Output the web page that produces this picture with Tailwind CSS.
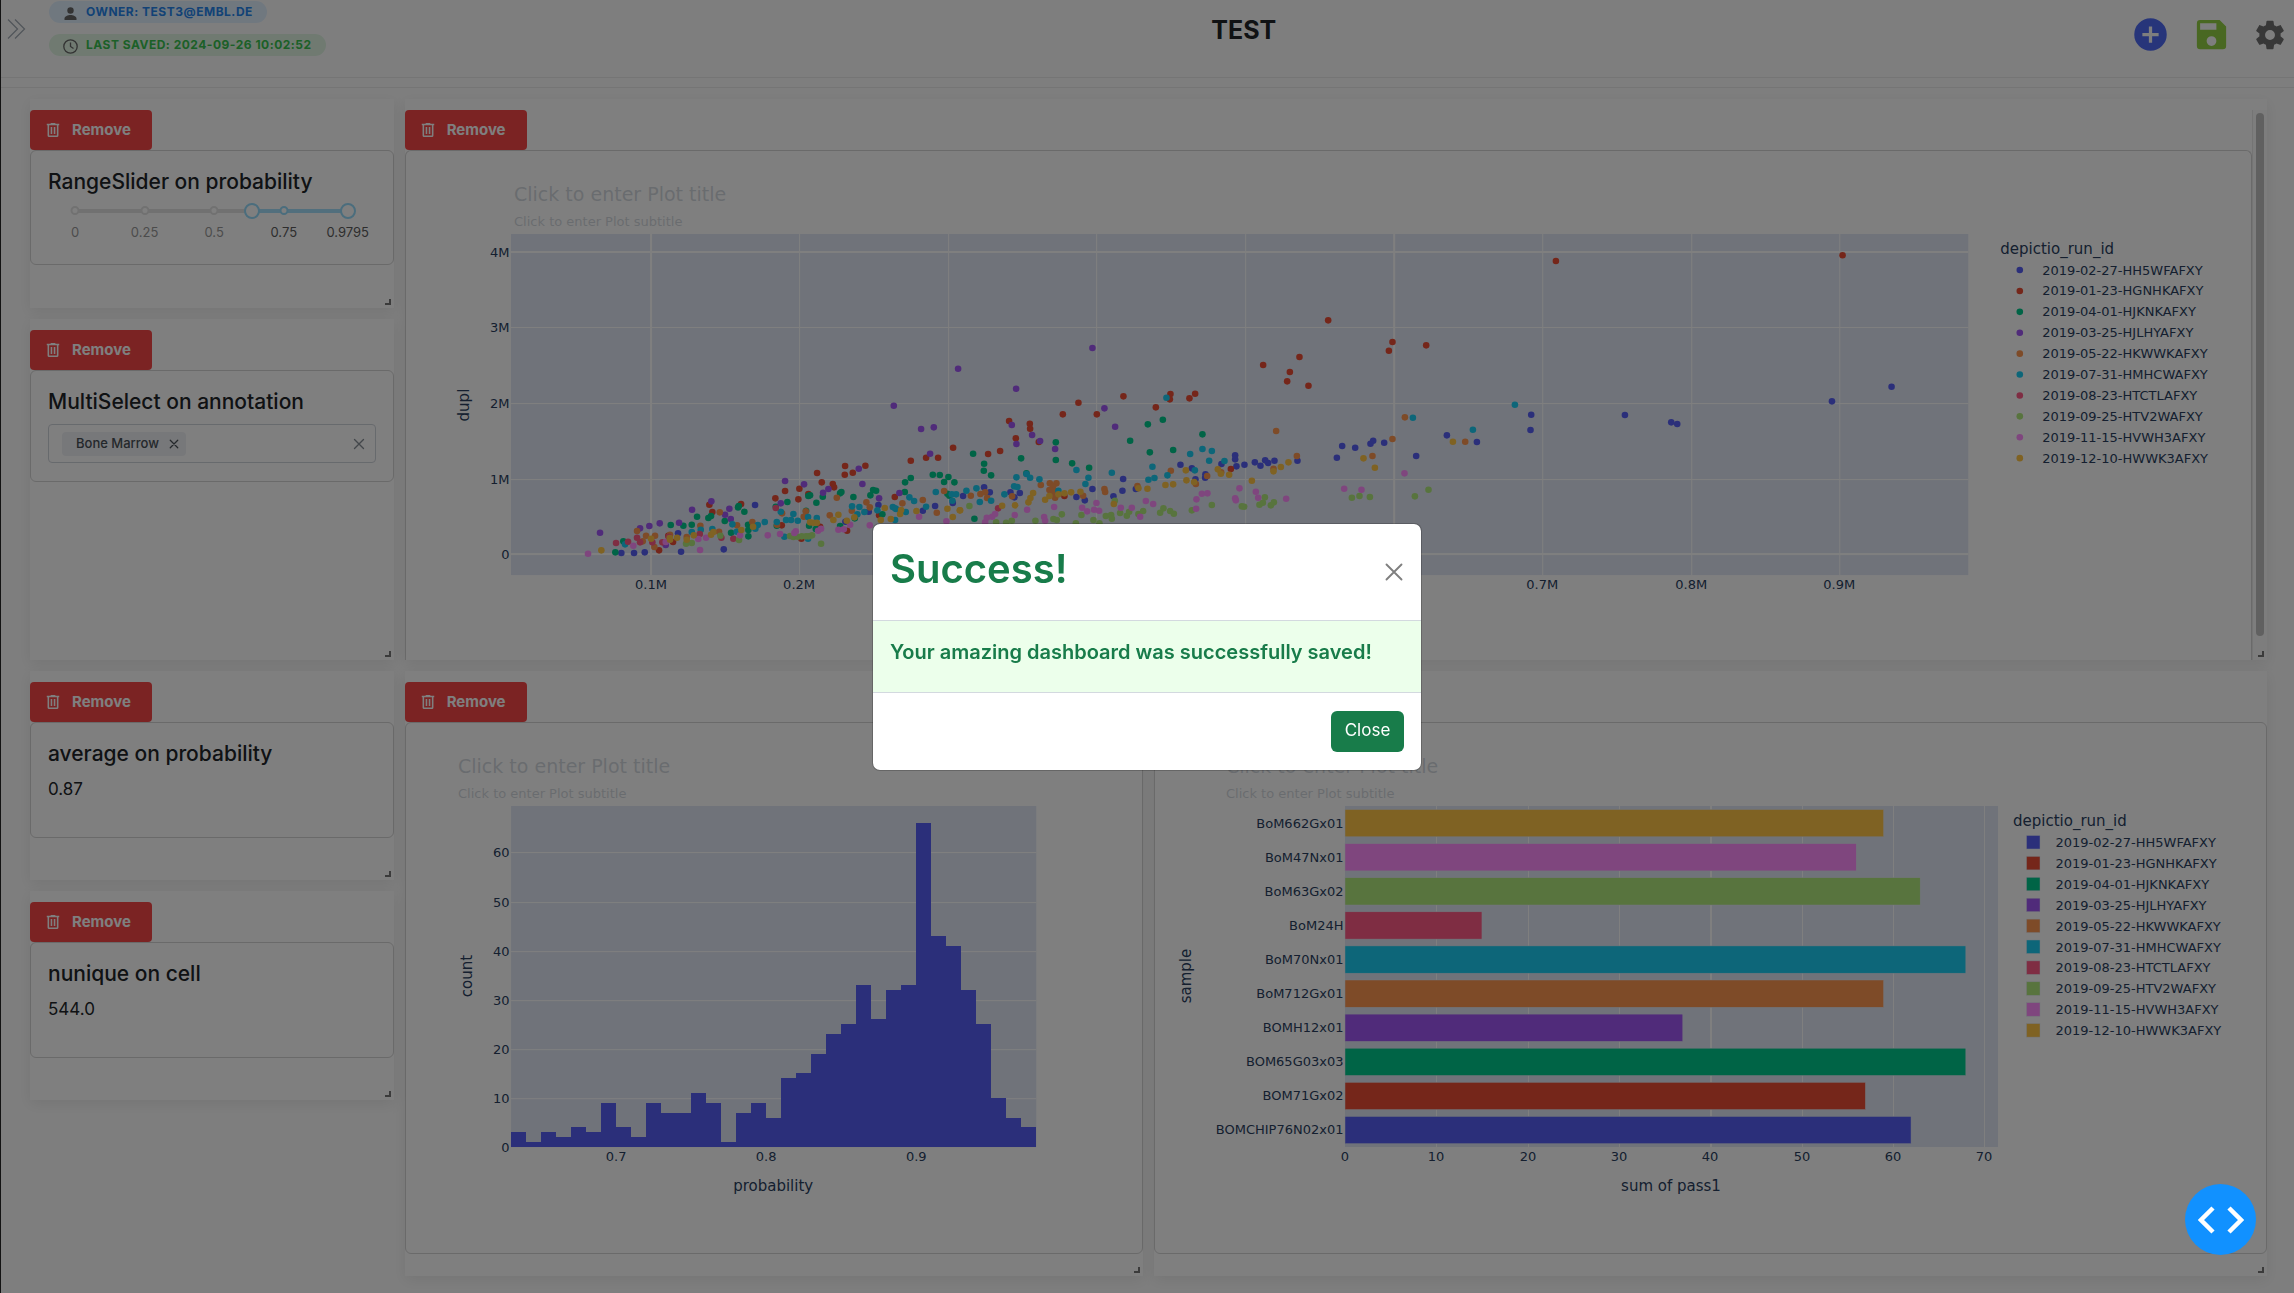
<!DOCTYPE html>
<html lang="en">
<head>
<meta charset="utf-8">
<title>TEST</title>
<script src="https://cdn.jsdelivr.net/npm/@tailwindcss/browser@4"></script>
</head>
<body class="min-h-screen border-l border-neutral-800 bg-[#fdfdfd] font-['Inter',sans-serif] text-[#212529]">

<svg class="hidden">
  <symbol id="trash" viewBox="4 3 16 18"><path fill="currentColor" d="M9 3v1H4v2h1v13a2 2 0 0 0 2 2h10a2 2 0 0 0 2-2V6h1V4h-5V3H9M7 6h10v13H7V6m2 2v9h2V8H9m4 0v9h2V8h-2Z"/></symbol>
  <symbol id="cross" viewBox="0 0 16 16"><path d="M2 2l12 12M14 2L2 14" fill="none" stroke="currentColor" stroke-linecap="round"/></symbol>
</svg>

<header class="flex h-[78px] items-start border-b border-[#eaeaea]">
  <div class="flex w-[22%] items-start">
    <button type="button" aria-label="Open sidebar" class="mt-[18px] ml-[6px] text-[#a3abb5]">
      <svg class="h-[22px] w-[20px]" viewBox="0 0 20 22" fill="none" stroke="currentColor" stroke-width="1.3"><path d="M1 1.500l9.500 9.500L1 20.500M8 1.500l9.500 9.500L8 20.500"/></svg>
    </button>
    <div class="mt-px ml-[22px] flex flex-col items-start gap-[11px] text-[12px] font-bold tracking-[0.5px]">
      <div class="flex h-[22px] items-center gap-2 rounded-full bg-[#e1f0ff] px-[14px] text-[#2585ec]">
        <svg class="mt-[2px] size-[15px] text-[#666]" viewBox="0 0 15 15" fill="currentColor"><circle cx="7.500" cy="4.500" r="3.200"/><path d="M1.500 14v-1.500c0-2.300 3.500-3.500 6-3.500s6 1.200 6 3.500V14z"/></svg>
        <span>OWNER: TEST3@EMBL.DE</span>
      </div>
      <div class="flex h-[22px] items-center gap-2 rounded-full bg-[#e0f5e3] px-[14px] text-[#38c04f]">
        <svg class="mt-[2px] size-[15px] text-[#666]" viewBox="0 0 15 15" fill="none" stroke="currentColor" stroke-width="1.300"><circle cx="7.500" cy="7.500" r="6.700"/><path d="M7.500 3.500v4l3 2"/></svg>
        <span>LAST SAVED: 2024-09-26 10:02:52</span>
      </div>
    </div>
  </div>
  <h1 class="mt-[13px] flex-1 text-center text-[25px] leading-[34px] font-bold">TEST</h1>
  <div class="mt-[15px] flex w-[13.6%] items-center justify-end gap-[22px] pr-[7px]">
    <button type="button" aria-label="Add component" class="text-[#4f6af5]"><svg class="size-[39px]" viewBox="0 0 24 24"><path fill="currentColor" d="M17 13h-4v4h-2v-4H7v-2h4V7h2v4h4m-5-9A10 10 0 0 0 2 12a10 10 0 0 0 10 10 10 10 0 0 0 10-10A10 10 0 0 0 12 2Z"/></svg></button>
    <button type="button" aria-label="Save" class="text-[#93d044]"><svg class="size-[39px]" viewBox="0 0 24 24"><path fill="currentColor" d="M15 9H5V5h10m-3 14a3 3 0 0 1-3-3 3 3 0 0 1 3-3 3 3 0 0 1 3 3 3 3 0 0 1-3 3m5-16H5a2 2 0 0 0-2 2v14a2 2 0 0 0 2 2h14a2 2 0 0 0 2-2V7l-4-4Z"/></svg></button>
    <button type="button" aria-label="Settings" class="text-[#707070]"><svg class="size-[34px]" viewBox="0 0 24 24"><path fill="currentColor" d="M12 15.500A3.500 3.500 0 0 1 8.500 12 3.500 3.500 0 0 1 12 8.500a3.500 3.500 0 0 1 3.500 3.500 3.500 3.500 0 0 1-3.500 3.500m7.430-2.530c.04-.32.07-.64.07-.97s-.03-.66-.07-1l2.110-1.630c.19-.15.24-.42.12-.64l-2-3.460c-.12-.22-.39-.31-.61-.22l-2.490 1c-.52-.39-1.060-.73-1.690-.98l-.37-2.650A.506.506 0 0 0 14 2h-4c-.25 0-.46.18-.5.42l-.37 2.650c-.63.25-1.170.59-1.690.98l-2.490-1c-.22-.09-.49 0-.61.22l-2 3.460c-.13.22-.07.49.12.64L4.570 11c-.04.34-.07.67-.07 1s.03.65.07.97l-2.110 1.660c-.19.15-.25.42-.12.64l2 3.460c.12.22.39.3.61.22l2.490-1.010c.52.4 1.060.74 1.690.99l.37 2.650c.04.24.25.42.5.42h4c.25 0 .46-.18.5-.42l.37-2.650c.63-.26 1.170-.59 1.690-.99l2.490 1.010c.22.08.49 0 .61-.22l2-3.460c.12-.22.07-.49-.12-.64l-2.110-1.660Z"/></svg></button>
  </div>
</header>
<hr class="mt-[9px] border-[#eaeaea]">

<main class="mt-[11px] mr-[27px] ml-[29px] grid auto-rows-[33px] grid-cols-12 gap-[11px]">

  <section class="relative col-span-2 row-span-5 bg-white pt-[11px] shadow-[0_4px_14px_rgba(0,0,0,0.08)]">
    <button type="button" class="flex h-10 w-[122px] items-center rounded-[4px] bg-[#f64747] pl-4 text-[15px] font-bold text-white"><svg class="mr-3 size-[14px]"><use href="#trash"/></svg>Remove</button>
    <div class="h-[115px] rounded-[6px] border border-[#d4d4d4] px-[17px] pt-[18px]">
      <h2 class="text-[21px] leading-[26px] font-medium">RangeSlider on probability</h2>
      <div class="relative mt-[14px] mr-[28px] ml-[27px] h-1 rounded-full bg-[#e3e3e3]" id="slider">
        <div class="absolute top-0 h-1 bg-[#a5dffa]" style="left:64.800%;width:35.200%"></div>
      </div>
    </div>
    <span class="absolute right-[3px] bottom-[3px] size-[6px] border-r-2 border-b-2 border-[#777]"></span>
  </section>

  <section class="relative col-span-10 row-span-13 flex bg-white pt-[11px] shadow-[0_4px_14px_rgba(0,0,0,0.08)]">
    <div class="flex min-w-0 flex-1 flex-col">
      <button type="button" class="flex h-10 w-[122px] shrink-0 items-center rounded-[4px] bg-[#f64747] pl-4 text-[15px] font-bold text-white"><svg class="mr-3 size-[14px]"><use href="#trash"/></svg>Remove</button>
      <div class="min-h-0 flex-1 overflow-hidden rounded-t-[6px] border border-b-0 border-[#d4d4d4]">
        <svg id="scatter" class="h-auto w-full font-['DejaVu_Sans',sans-serif] text-[13px]" viewBox="406 151 1845 509" role="img" aria-label="dupl scatter plot"></svg>
      </div>
    </div>
    <div class="flex w-[15px] justify-center border-l border-[#e8e8e8] bg-[#fafafa] pt-[3px]"><div class="h-[523px] w-2 rounded-full bg-[#c1c1c1]"></div></div>
    <span class="absolute right-[3px] bottom-[3px] size-[6px] border-r-2 border-b-2 border-[#777]"></span>
  </section>

  <section class="relative col-span-2 row-span-8 bg-white pt-[11px] shadow-[0_4px_14px_rgba(0,0,0,0.08)]">
    <button type="button" class="flex h-10 w-[122px] items-center rounded-[4px] bg-[#f64747] pl-4 text-[15px] font-bold text-white"><svg class="mr-3 size-[14px]"><use href="#trash"/></svg>Remove</button>
    <div class="rounded-[6px] border border-[#d4d4d4] px-[17px] py-[18px]">
      <h2 class="text-[21px] leading-[26px] font-medium"><label for="annotation">MultiSelect on annotation</label></h2>
      <div class="mt-[9px] flex h-[39px] items-center rounded-[4px] border border-[#ced4da] pr-[10px] pl-[13px]">
        <span class="flex h-6 shrink-0 items-center rounded-[4px] bg-[#eff1f4] pr-[7px] pl-[14px] text-[13px] font-medium text-[#495057]">Bone Marrow
          <button type="button" aria-label="Remove Bone Marrow" class="ml-[10px]"><svg class="size-[10px]" stroke-width="2"><use href="#cross"/></svg></button></span>
        <input id="annotation" type="text" class="min-w-0 flex-1 bg-transparent outline-none">
        <button type="button" aria-label="Clear" class="text-[#868e96]"><svg class="size-3" stroke-width="1.800"><use href="#cross"/></svg></button>
      </div>
    </div>
    <span class="absolute right-[3px] bottom-[3px] size-[6px] border-r-2 border-b-2 border-[#777]"></span>
  </section>

  <section class="relative col-span-2 row-span-5 bg-white pt-[11px] shadow-[0_4px_14px_rgba(0,0,0,0.08)]">
    <button type="button" class="flex h-10 w-[122px] items-center rounded-[4px] bg-[#f64747] pl-4 text-[15px] font-bold text-white"><svg class="mr-3 size-[14px]"><use href="#trash"/></svg>Remove</button>
    <div class="h-[116px] rounded-[6px] border border-[#d4d4d4] px-[17px] pt-[18px]">
      <h2 class="text-[21px] leading-[26px] font-medium">average on probability</h2>
      <p class="mt-[9px] text-[17px] leading-[26px]">0.87</p>
    </div>
    <span class="absolute right-[3px] bottom-[3px] size-[6px] border-r-2 border-b-2 border-[#777]"></span>
  </section>

  <section class="relative col-span-4 row-span-14 bg-white pt-[11px] shadow-[0_4px_14px_rgba(0,0,0,0.08)]">
    <button type="button" class="flex h-10 w-[122px] items-center rounded-[4px] bg-[#f64747] pl-4 text-[15px] font-bold text-white"><svg class="mr-3 size-[14px]"><use href="#trash"/></svg>Remove</button>
    <div class="rounded-[6px] border border-[#d4d4d4]">
      <svg id="histogram" class="h-auto w-full font-['DejaVu_Sans',sans-serif] text-[13px]" viewBox="406 723 736 530" role="img" aria-label="probability histogram"></svg>
    </div>
    <span class="absolute right-[3px] bottom-[3px] size-[6px] border-r-2 border-b-2 border-[#777]"></span>
  </section>

  <section class="relative col-span-6 row-span-14 bg-white pt-[11px] shadow-[0_4px_14px_rgba(0,0,0,0.08)]">
    <button type="button" class="flex h-10 w-[122px] items-center rounded-[4px] bg-[#f64747] pl-4 text-[15px] font-bold text-white"><svg class="mr-3 size-[14px]"><use href="#trash"/></svg>Remove</button>
    <div class="rounded-[6px] border border-[#d4d4d4]">
      <svg id="bars" class="h-auto w-full font-['DejaVu_Sans',sans-serif] text-[13px]" viewBox="1155 723 1111 530" role="img" aria-label="sum of pass1 by sample"></svg>
    </div>
    <span class="absolute right-[3px] bottom-[3px] size-[6px] border-r-2 border-b-2 border-[#777]"></span>
  </section>

  <section class="relative col-span-2 row-span-5 bg-white pt-[11px] shadow-[0_4px_14px_rgba(0,0,0,0.08)]">
    <button type="button" class="flex h-10 w-[122px] items-center rounded-[4px] bg-[#f64747] pl-4 text-[15px] font-bold text-white"><svg class="mr-3 size-[14px]"><use href="#trash"/></svg>Remove</button>
    <div class="h-[116px] rounded-[6px] border border-[#d4d4d4] px-[17px] pt-[18px]">
      <h2 class="text-[21px] leading-[26px] font-medium">nunique on cell</h2>
      <p class="mt-[9px] text-[17px] leading-[26px]">544.0</p>
    </div>
    <span class="absolute right-[3px] bottom-[3px] size-[6px] border-r-2 border-b-2 border-[#777]"></span>
  </section>
</main>

<div class="fixed inset-0 flex items-center justify-center bg-black/50">
  <div role="dialog" aria-modal="true" aria-labelledby="dialog-title" class="w-[550px] rounded-lg border border-black/20 bg-white bg-clip-padding text-[#187c4a]">
    <div class="flex h-[97px] items-center justify-between border-b border-[#d3d9df] px-[17px]">
      <h2 id="dialog-title" class="mb-[5px] text-[40px] leading-[50px] font-semibold">Success!</h2>
      <button type="button" aria-label="Dismiss" class="text-[#7f7f7f]"><svg class="size-[20px]" stroke-width="1.500"><use href="#cross"/></svg></button>
    </div>
    <div class="h-[72px] border-b border-[#d3d9df] bg-[#ecffeb] px-[17px] pt-[17px] text-[20px] leading-[28px] font-semibold">Your amazing dashboard was successfully saved!</div>
    <div class="flex h-[77px] items-center justify-end px-[17px]">
      <button type="button" class="h-[41px] w-[73px] rounded-[6px] bg-[#187c4a] text-[17px] text-white">Close</button>
    </div>
  </div>
</div>

<button type="button" aria-label="Developer tools" class="fixed right-[38px] bottom-[38px] flex size-[71px] items-center justify-center rounded-full bg-[#1191ff] text-white">
  <svg class="h-7 w-[46px]" viewBox="0 0 46 28" fill="none" stroke="currentColor" stroke-width="4.500"><path d="M15 2L3 14l12 12M31 2l12 12-12 12"/></svg>
</button>

<script>
const INK = '#2a3f5f', PLOT = '#e1e7f4', GRID = '#fff';
const COLORS = ['#575ff5','#eb4c34','#00c88c','#a056f4','#fc9650','#1acdf2','#fe5a86','#b0e87c','#ff8cfc','#fec446'];
const RUNS = ['2019-02-27-HH5WFAFXY','2019-01-23-HGNHKAFXY','2019-04-01-HJKNKAFXY','2019-03-25-HJLHYAFXY','2019-05-22-HKWWKAFXY','2019-07-31-HMHCWAFXY','2019-08-23-HTCTLAFXY','2019-09-25-HTV2WAFXY','2019-11-15-HVWH3AFXY','2019-12-10-HWWK3AFXY'];

const text = (x, y, s, o = {}) => `<text x="${x}" y="${y}" fill="${INK}" font-size="${o.size || 13}" text-anchor="${o.anchor || 'start'}"${o.fade ? ' opacity="0.2"' : ''}>${s}</text>`;
const vtext = (x, y, s) => `<text transform="translate(${x} ${y}) rotate(-90)" fill="${INK}" font-size="15" text-anchor="middle">${s}</text>`;
const rect = (x, y, w, h, c, extra = '') => `<rect x="${x}" y="${y}" width="${w}" height="${h}" fill="${c}" ${extra}/>`;
const titles = (x, y) => text(x, y, 'Click to enter Plot title', {size: 19, fade: 1}) + text(x, y + 25, 'Click to enter Plot subtitle', {fade: 1});

/* Range slider marks, handles and labels */
const MAX = 0.9795, slider = document.getElementById('slider');
[0, 0.25, 0.5, 0.75, MAX].forEach(v => {
  const left = v / MAX * 100, on = v > 0.7;
  slider.insertAdjacentHTML('beforeend',
    (v < MAX ? `<span class="absolute -top-[3px] size-[9px] -translate-x-1/2 rounded-full border-2 bg-white ${on ? 'border-[#96dbfa]' : 'border-[#e3e3e3]'}" style="left:${left}%"></span>` : '') +
    `<span class="absolute top-[14px] -translate-x-1/2 text-[13px] leading-[18px] ${on ? 'text-[#5c5c5c]' : 'text-[#999]'}" style="left:${left}%">${v}</span>`);
});
[0.635, MAX].forEach((v, i) => slider.insertAdjacentHTML('beforeend',
  `<span class="absolute -top-[6px] size-4 -translate-x-1/2 rounded-full border-2 border-[#96dbfa] bg-white" style="left:${v / MAX * 100}%"></span>
   <input type="range" min="0" max="0.9795" step="any" value="${v}" aria-label="${i ? 'Maximum' : 'Minimum'} probability" class="absolute inset-x-0 -top-[6px] h-4 w-full opacity-0">`));

/* Scatter: each run has two panels of points, in thirds of a unit from the panel origins (500, 230) and (960, 230) */
const POINTS = [
 [[364,969,402,969,434,967,543,965,671,958,765,825,534,910,1135,825,1106,845,1305,828,1268,842,1358,819,1036,875],
  [9,798,72,772,89,787,151,787,163,802,179,789,349,801,374,811,397,777,489,747,487,782,460,799,527,777,661,704,695,715,706,748,736,733,735,743,784,702,825,676,825,688,829,709,853,704,884,697,901,707,915,691,924,699,943,692,1012,692,1130,683,1146,648,1185,653,1231,641,1239,632,1272,638,1368,678,1460,616,1550,636,1713,554,1711,600,1994,555,2133,577,2151,582,2615,514,2794,470]],
 [[477,961,519,936,628,824,637,846,723,822,826,805,855,783,898,776,895,808,925,792,951,729,965,757,998,762,1002,772,1035,708,1034,734,1058,728,1096,707,1232,692,1278,683,1314,683,1359,653,1184,801,845,886,904,926,1041,902,960,890,1137,856,505,917],
  [84,672,120,663,147,573,167,625,209,581,210,596,236,636,308,553,355,518,410,553,490,499,587,532,631,492,629,508,688,505,705,491,909,405,1018,381,989,426,981,454,1045,467,1104,271,1297,336,1286,362,1398,346,812,717,313,798,1787,93,2647,76]],
 [[346,967,370,934,512,885,550,887,575,884,591,860,625,864,633,858,714,832,716,828,733,845,674,873,693,908,744,884,745,900,745,919,827,830,862,816,930,796,925,798,918,842,927,887,949,818,947,897,968,800,1024,786,1020,790,1060,801,1119,780,1128,782,1111,796,1147,853,1215,757,1232,744,1214,786,1298,734,1319,735,1332,756,1345,741,1363,757,1342,791,1348,797,1064,865,1020,888,830,887],
  [39,671,72,701,71,722,93,736,43,866,183,685,287,637,287,690,336,700,387,713,199,730,510,632,563,583,608,569,569,667,639,660,727,613]],
 [[300,908,420,895,448,888,479,880,537,878,497,945,576,839,634,814,675,854,688,836,692,867,842,820,855,753,912,763,969,788,985,777,1076,716,1087,762,1137,805,1198,789,1290,671,1301,592,1263,597,1181,527,1374,416],
  [168,476,155,585,169,642,216,615,240,633,285,657,397,354,433,535,465,590]],
 [[411,903,438,917,465,917,428,934,463,951,510,914,601,887,659,847,657,905,757,876,711,886,831,884,846,850,917,844,911,860,989,856,1010,803,1055,842,1099,817,1109,832,1207,820,1268,810,1310,848,1332,783,560,921],
  [32,797,61,792,75,787,81,804,156,799,242,765,269,760,289,760,279,768,268,780,284,782,276,792,285,803,369,797,433,777,435,786,532,768,632,722,741,738,707,762,783,727,940,716,948,603,1010,678,1237,678,1297,627,1334,562,1515,635]],
 [[375,943,575,906,602,899,637,897,697,883,710,905,773,885,794,876,766,896,830,876,842,845,858,870,873,870,880,852,893,872,924,861,950,864,853,920,924,926,1056,829,1078,831,1072,853,1093,846,1132,841,1178,831,1185,835,1188,837,1217,846,1228,802,1242,813,1278,830,1307,786,1355,793,1368,793,1357,812,1185,870],
  [19,782,49,775,59,816,93,812,133,793,162,769,172,771,169,742,199,732,210,743,238,748,349,720,385,743,376,762,295,782,455,728,577,710,583,744,565,749,622,736,704,721,690,672,727,657,755,663,747,692,793,693,619,503,1358,563,1538,599,1664,524]],
 [[348,939,384,935,411,923,420,937,457,937,487,937,506,920,599,912,664,923,700,926,827,834],
  [114,835]],
 [[558,941,575,939,661,917,717,930,870,918,880,921,893,920,905,919,918,919,926,919,936,916,963,941],
  [28,828,108,877,138,878,155,872,226,872,280,867,290,870,305,853,347,880,364,855,400,870,418,880,437,858,453,855,455,866,464,812,480,849,500,857,507,845,535,852,549,843,600,848,610,835,630,843,641,851,695,841,755,825,845,829,852,830,898,824,908,818,914,802,932,826,941,817,1175,803,1198,798,1229,801,1364,799,1405,779]],
 [[264,971,400,947,595,927,618,923,600,960,720,916,803,916,840,912,883,909,887,904,954,902,963,896,1015,899,1031,898,1050,884,1109,886,1257,860,1339,874,497,936],
  [80,863,96,860,105,852,75,877,164,855,201,839,252,861,255,872,282,831,366,833,381,844,402,839,409,819,417,842,482,833,515,833,540,860,557,813,579,822,709,808,708,836,725,791,742,790,838,775,825,805,827,811,887,785,894,803,978,806,1152,776,1204,779,1333,730]],
 [[304,961,453,926,509,924,510,929,531,923,560,929,581,916,633,914,640,906,724,900,759,890,930,877,940,878,950,878,1000,870,1015,854,1040,872,1063,862,1142,870,1154,834,1172,867,1200,852,1203,840,1249,843,1342,836,1358,861,1379,841],
  [0,841,126,827,165,826,205,817,211,804,219,789,255,809,268,798,295,793,313,790,333,787,361,785,461,822,535,775,562,776,616,765,639,763,679,751,677,721,702,756,773,718,782,731,807,734,875,752,940,724,962,711,985,697,1210,685,1244,713,1478,635]]
];
let s = titles(514, 201) + rect(511, 234, 1457, 341, PLOT);
[252, 327, 403, 479, 554].forEach((y, i) => {
  s += rect(511, y - (i % 4 ? 0 : 1), 1457, i % 4 ? 1 : 2, GRID);
  s += text(509.5, y + 5, i < 4 ? (4 - i) + 'M' : '0', {anchor: 'end'});
});
[651, 799, 948, 1096, 1245, 1394, 1542, 1691, 1839].forEach((x, i) => {
  s += rect(x - (i % 5 ? 0 : 1), 234, i % 5 ? 1 : 2, 341, GRID);
  s += text(x, 589, '0.' + (i + 1) + 'M', {anchor: 'middle'});
});
POINTS.forEach((panels, r) => panels.forEach((p, k) => {
  for (let i = 0; i < p.length; i += 2)
    s += `<circle cx="${((k ? 960 : 500) + p[i] / 3).toFixed(1)}" cy="${(230 + p[i + 1] / 3).toFixed(1)}" r="3.3" fill="${COLORS[r]}"/>`;
}));
s += vtext(469, 405, 'dupl') + text(2000, 254, 'depictio_run_id', {size: 15});
RUNS.forEach((run, i) => {
  const y = 270 + i * 20.9;
  s += `<circle cx="2019.5" cy="${y}" r="3.3" fill="${COLORS[i]}"/>` + text(2042, y + 4.5, run);
});
document.getElementById('scatter').innerHTML = s;

/* Histogram */
const COUNTS = [3,1,3,2,4,3,9,4,2,9,7,7,11,9,1,7,9,6,14,15,19,23,25,33,26,32,33,66,43,41,32,25,10,6,4];
s = titles(458, 773) + rect(511, 806, 525, 341, PLOT);
for (let v = 0; v <= 60; v += 10) {
  const y = Math.round(1147 - v * 4.91);
  if (v) s += rect(511, y, 525, 1, GRID);
  s += text(509.5, y + 5, v, {anchor: 'end'});
}
COUNTS.forEach((c, i) => s += rect(511 + i * 15, Math.round(1147 - c * 4.91), 15, Math.round(c * 4.91), COLORS[0], 'shape-rendering="crispEdges"'));
s += text(616, 1161, '0.7', {anchor: 'middle'}) + text(766, 1161, '0.8', {anchor: 'middle'}) + text(916, 1161, '0.9', {anchor: 'middle'});
s += text(773, 1191, 'probability', {size: 15, anchor: 'middle'}) + vtext(472, 976, 'count');
document.getElementById('histogram').innerHTML = s;

/* Horizontal bars, top to bottom */
const SAMPLES = [['BoM662Gx01',59],['BoM47Nx01',56],['BoM63Gx02',63],['BoM24H',15],['BoM70Nx01',68],['BoM712Gx01',59],['BOMH12x01',37],['BOM65G03x03',68],['BOM71Gx02',57],['BOMCHIP76N02x01',62]];
s = titles(1226, 773) + rect(1345, 806, 653, 341, PLOT);
for (let v = 0; v <= 70; v += 10) {
  const x = Math.round(1345 + v * 9.13);
  if (v) s += rect(x, 806, v === 40 ? 2 : 1, 341, GRID);
  s += text(x, 1161, v, {anchor: 'middle'});
}
SAMPLES.forEach(([name, v], i) => {
  const y = 809.5 + i * 34.1;
  s += rect(1345, y, v * 9.13, 27.3, COLORS[9 - i], 'stroke="#e5ecf6" stroke-width="0.5"') + text(1343.5, y + 18, name, {anchor: 'end'});
});
s += text(1671, 1191, 'sum of pass1', {size: 15, anchor: 'middle'}) + vtext(1191, 976, 'sample') + text(2013, 826, 'depictio_run_id', {size: 15});
RUNS.forEach((run, i) => {
  const y = 842 + i * 20.9;
  s += rect(2026.5, y - 6.5, 13.5, 13.5, COLORS[i], 'stroke="#e5ecf6" stroke-width="0.5"') + text(2055.5, y + 5, run);
});
document.getElementById('bars').innerHTML = s;
</script>
</body>
</html>
